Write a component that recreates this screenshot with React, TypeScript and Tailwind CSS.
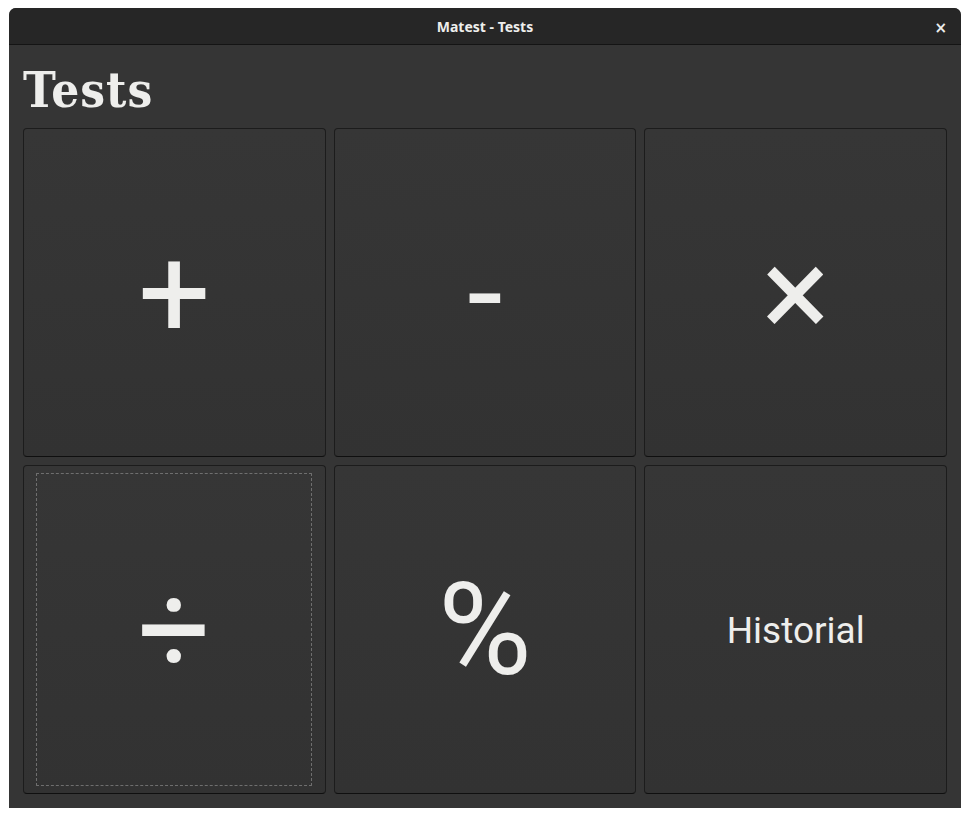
import React from "react";

const cards = [
  { label: "+", big: true },
  { label: "-", big: true },
  { label: "×", big: true },
  { label: "÷", big: true, focus: true },
  { label: "%", big: true },
  { label: "Historial", big: false },
];

export default function App() {
  return (
    <div className="w-[970px] h-[818px] bg-white pl-[9px] pt-[8px]">
      <div className="w-[952px] h-[800px] flex flex-col bg-[#353535] rounded-t-[7px] overflow-hidden">
        {/* title bar */}
        <div className="relative h-[37px] shrink-0 flex items-center justify-center bg-[#262626] border-b border-[#141414]">
          <span className="text-[14px] font-bold text-[#eeeeec] [font-family:'Noto_Sans',sans-serif]">
            Matest - Tests
          </span>
          <span className="absolute right-[14px] top-[9px] text-[15px] font-bold text-[#eeeeec] [font-family:'DejaVu_Sans',sans-serif]">
            ×
          </span>
        </div>

        {/* content */}
        <div className="flex-1 flex flex-col px-[14px] pb-[14px]">
          <h1 className="h-[83px] pt-[21px] text-[49px] leading-none font-bold tracking-[1px] text-[#eeeeec] [font-family:'DejaVu_Serif_Condensed','DejaVu_Serif',serif] [font-stretch:condensed]">
            Tests
          </h1>
          <div className="flex-1 grid grid-cols-3 grid-rows-2 gap-[8px]">
            {cards.map((c, i) => (
              <button
                key={i}
                className="relative flex items-center justify-center rounded-[4px] border border-[#1c1c1c] border-b-[#0f0f0f] bg-gradient-to-b from-[#363636] to-[#323232] text-[#eeeeec] [font-family:Roboto,sans-serif]"
              >
                {c.focus && (
                  <div className="absolute left-[12px] right-[13px] top-[7px] bottom-[7px] border border-dashed border-[#6f6f6f] rounded-[1px]" />
                )}
                {c.big ? (
                  <span className="text-[128px] leading-none">{c.label}</span>
                ) : (
                  <span className="text-[37px] leading-none pt-[2px]">{c.label}</span>
                )}
              </button>
            ))}
          </div>
        </div>
      </div>
    </div>
  );
}
